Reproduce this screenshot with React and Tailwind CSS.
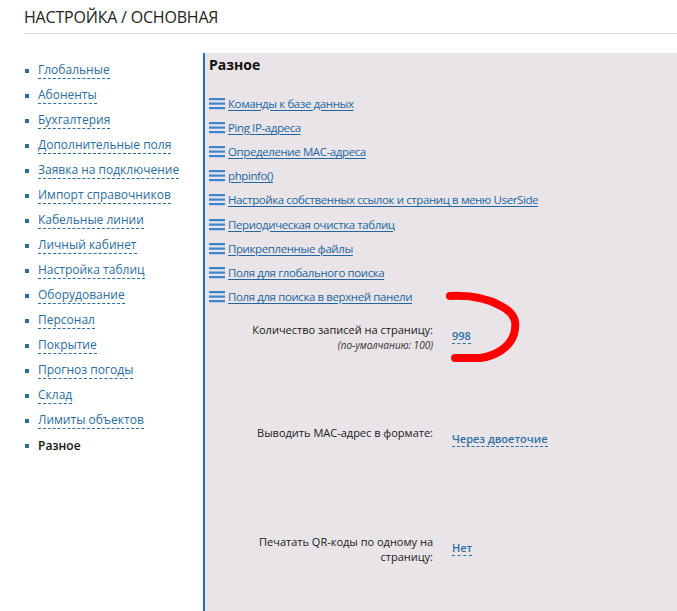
const menu = [
  'Глобальные',
  'Абоненты',
  'Бухгалтерия',
  'Дополнительные поля',
  'Заявка на подключение',
  'Импорт справочников',
  'Кабельные линии',
  'Личный кабинет',
  'Настройка таблиц',
  'Оборудование',
  'Персонал',
  'Покрытие',
  'Прогноз погоды',
  'Склад',
  'Лимиты объектов',
];

const links = [
  'Команды к базе данных',
  'Ping IP-адреса',
  'Определение MAC-адреса',
  'phpinfo()',
  'Настройка собственных ссылок и страниц в меню UserSide',
  'Периодическая очистка таблиц',
  'Прикрепленные файлы',
  'Поля для глобального поиска',
  'Поля для поиска в верхней панели',
];

function Burger() {
  return (
    <svg width="16" height="13" viewBox="0 0 16 13" className="shrink-0 mr-[3px]">
      <rect x="0" y="1" width="16" height="2.2" fill="#3d86cc" />
      <rect x="0" y="5.5" width="16" height="2.2" fill="#3d86cc" />
      <rect x="0" y="10" width="16" height="2.2" fill="#3d86cc" />
    </svg>
  );
}

function Setting({ label, hint, value }) {
  return (
    <div className="flex">
      <div className="w-[224px] shrink-0 text-right text-[11px] leading-[15px] text-[#1a1a1a]">
        {label}
        {hint && <div className="italic text-[10px] leading-[16px] text-[#333]">{hint}</div>}
      </div>
      <div className="ml-[19px]">
        <span className="text-[11px] leading-[15px] font-semibold text-[#2d6fa3] border-b border-dashed border-[#2d6fa3]">
          {value}
        </span>
      </div>
    </div>
  );
}

export default function App() {
  return (
    <div className="relative w-[677px] h-[611px] overflow-hidden bg-white font-['Open_Sans','Noto_Sans',sans-serif]">
      {/* Header */}
      <div className="pl-6 pt-[7px]">
        <h1 className="text-[16px] leading-[20px] text-[#222] tracking-[-0.2px] pb-[6px] border-b border-[#dcdcdc]">
          НАСТРОЙКА / ОСНОВНАЯ
        </h1>
      </div>

      <div className="flex mt-[19px] h-full">
        {/* Sidebar */}
        <ul className="w-[203px] shrink-0 pl-[25px] pt-[5px]">
          {menu.map((m) => (
            <li key={m} className="flex items-center h-[25px]">
              <span className="w-[4px] h-[4px] bg-[#2b6d9e] mr-[9px]" />
              <span className="text-[12px] leading-[16px] text-[#2b6d9e] border-b border-dashed border-[#2b6d9e]">{m}</span>
            </li>
          ))}
          <li className="flex items-center h-[25px]">
            <span className="w-[4px] h-[4px] bg-[#2b6d9e] mr-[9px]" />
            <span className="text-[12px] leading-[16px] font-semibold text-[#111]">Разное</span>
          </li>
        </ul>

        {/* Panel */}
        <div className="flex-1 bg-[#e8e4e7] border-l-2 border-[#1d79ad] pl-[4px] pt-[2px]">
          <h2 className="text-[14px] leading-[20px] font-bold text-[#111] mb-[16px]">Разное</h2>
          <div className="flex flex-col">
            {links.map((l) => (
              <div key={l} className="flex items-center h-[24.2px]">
                <Burger />
                <a className="text-[11.5px] leading-[15px] text-[#2467a0] underline underline-offset-2 tracking-[-0.4px]">{l}</a>
              </div>
            ))}
          </div>
          <div className="mt-[13px]">
            <Setting label="Количество записей на страницу:" hint="(по-умолчанию: 100)" value="998" />
          </div>
          <div className="mt-[72px]">
            <Setting label="Выводить MAC-адрес в формате:" value="Через двоеточие" />
          </div>
          <div className="mt-[85px]">
            <Setting label={<>Печатать QR-коды по одному на<br />страницу:</>} value="Нет" />
          </div>
        </div>
      </div>

      {/* Red annotation */}
      <svg className="absolute left-0 top-0 pointer-events-none" width="677" height="611">
        <path
          d="M450 296 C 470 295, 487 298, 501 306 C 516 314, 517 323, 514 334 C 510 347, 496 356, 480 358 L 455 358"
          fill="none"
          stroke="#ff0000"
          strokeWidth="8"
          strokeLinecap="round"
        />
      </svg>
    </div>
  );
}
